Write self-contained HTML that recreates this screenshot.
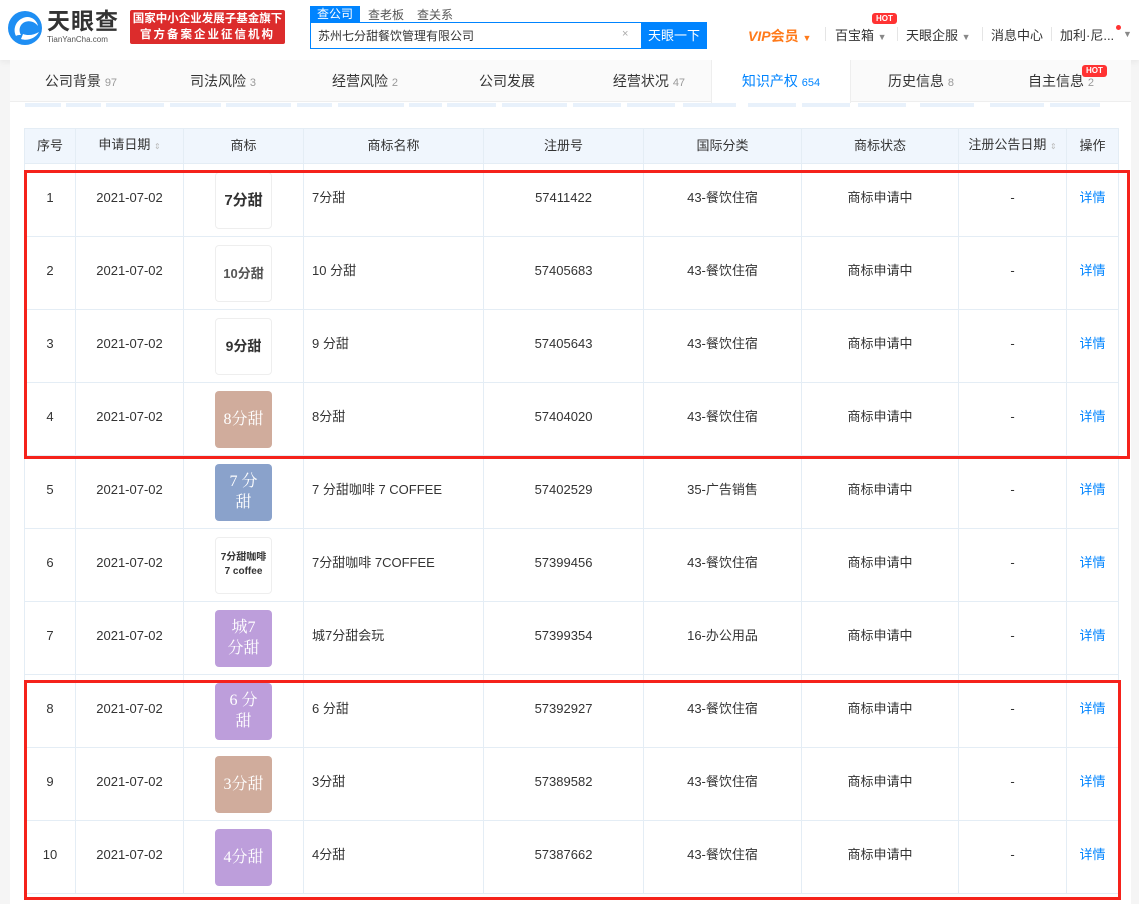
<!DOCTYPE html>
<html><head><meta charset="utf-8"><style>
*{margin:0;padding:0;box-sizing:border-box}
body{width:1139px;height:904px;overflow:hidden;background:#f5f5f5;font-family:"Liberation Sans","Noto Sans CJK SC",sans-serif;color:#333;font-size:13px;position:relative}
.hdr{position:absolute;left:0;top:0;width:1139px;height:60px;background:#fff;box-shadow:0 2px 6px rgba(0,0,0,.06)}
.abs{position:absolute}
.main{position:absolute;left:10px;top:60px;width:1121px;height:844px;background:#fff}
.tabs{position:absolute;left:10px;top:60px;width:1121px;height:42px;background:#fafafa;border-bottom:1px solid #eee}
.tab{position:absolute;top:0;height:42px;line-height:42px;font-size:14px;color:#333;text-align:center}
.tab small{font-size:11px;color:#999}
.pill{position:absolute;top:103px;height:4px;background:#e8f1fb}
table{position:absolute;left:24px;top:128px;border-collapse:collapse;table-layout:fixed;width:1094px}
td,th{border:1px solid #e4edf5;text-align:center;font-weight:normal;font-size:13px;line-height:16px}
th{height:35px;background:#f0f6fd;color:#333}
td{height:73px;padding-bottom:4px}
td.l{text-align:left;padding-left:8px}
a{color:#0084ff;text-decoration:none}
.lg{width:57px;height:57px;margin:4px auto 0;border-radius:4px;display:flex;align-items:center;justify-content:center;color:#fff;font-size:16px;line-height:21px;text-align:center;font-family:"Liberation Serif","Noto Serif CJK SC",serif}
.w{border:1px solid #eee;color:#333;font-weight:bold;font-family:"Liberation Sans","Noto Sans CJK SC",sans-serif}
.s{font-size:8px;color:#bbb}
.red{position:absolute;border:3px solid #f5221b}
</style></head><body>
<div class="hdr">
 <svg class="abs" style="left:7px;top:10px" width="36" height="36" viewBox="0 0 36 36"><circle cx="18" cy="18" r="17" fill="#1e8ef3"/><path d="M9 26C5 18 10 8 20 7c6 0 10 4 11 9-3-4-8-6-13-4-5 2-7 8-4 13-2 0-4 0-5 1z" fill="#fff"/><path d="M14 29c6 2 14 0 18-7-5 3-11 4-16 2z" fill="#fff"/></svg>
 <div class="abs" style="left:47px;top:8px;font-size:23px;font-weight:bold;color:#333;letter-spacing:1px;line-height:26px">天眼查</div>
 <div class="abs" style="left:47px;top:35px;font-size:8px;color:#555;line-height:9px">TianYanCha.com</div>
 <div class="abs" style="left:130px;top:10px;width:155px;height:34px;background:#dc2c2c;border-radius:2px;color:#fff;font-size:11.5px;font-weight:bold;line-height:16px;text-align:center;padding-top:1px">国家中小企业发展子基金旗下<br><span style="letter-spacing:2px">官方备案企业征信机构</span></div>
 <div class="abs" style="left:310px;top:6px;width:50px;height:17px;background:#0084ff;color:#fff;font-size:12px;text-align:center;line-height:17px">查公司</div>
 <div class="abs" style="left:368px;top:6px;font-size:12px;color:#555">查老板</div>
 <div class="abs" style="left:417px;top:6px;font-size:12px;color:#555">查关系</div>
 <div class="abs" style="left:310px;top:22px;width:397px;height:27px;border:1px solid #0084ff;background:#fff"></div>
 <div class="abs" style="left:318px;top:27px;font-size:12px;color:#333">苏州七分甜餐饮管理有限公司</div>
 <div class="abs" style="left:622px;top:28px;font-size:11px;color:#aaa">×</div>
 <div class="abs" style="left:641px;top:22px;width:66px;height:27px;background:#0084ff;color:#fff;font-size:13px;text-align:center;line-height:27px">天眼一下</div>
 <div class="abs" style="left:748px;top:26px;font-size:14px;font-weight:bold;color:#ff7a1a;font-style:italic">VIP<span style="font-style:normal">会员</span> <span style="font-size:9px">▼</span></div>
 <div class="abs" style="left:825px;top:27px;width:1px;height:14px;background:#e5e5e5"></div>
 <div class="abs" style="left:835px;top:25px;font-size:13px">百宝箱 <span style="font-size:9px;color:#888">▼</span></div>
 <div class="abs" style="left:872px;top:13px;background:#f33;color:#fff;font-size:8px;font-weight:bold;padding:0 4px;border-radius:3px;line-height:11px">HOT</div>
 <div class="abs" style="left:897px;top:27px;width:1px;height:14px;background:#e5e5e5"></div>
 <div class="abs" style="left:906px;top:25px;font-size:13px">天眼企服 <span style="font-size:9px;color:#888">▼</span></div>
 <div class="abs" style="left:982px;top:27px;width:1px;height:14px;background:#e5e5e5"></div>
 <div class="abs" style="left:991px;top:25px;font-size:13px">消息中心</div>
 <div class="abs" style="left:1051px;top:27px;width:1px;height:14px;background:#e5e5e5"></div>
 <div class="abs" style="left:1060px;top:25px;font-size:13px">加利·尼...</div>
 <div class="abs" style="left:1116px;top:25px;width:5px;height:5px;border-radius:50%;background:#f33"></div>
 <div class="abs" style="left:1123px;top:29px;font-size:9px;color:#888">▼</div>
</div>
<div class="main"></div>
<div class="tabs">
 <div class="tab" style="left:0;width:142px">公司背景 <small>97</small></div>
 <div class="tab" style="left:142px;width:142px">司法风险 <small>3</small></div>
 <div class="tab" style="left:284px;width:142px">经营风险 <small>2</small></div>
 <div class="tab" style="left:426px;width:142px">公司发展</div>
 <div class="tab" style="left:568px;width:142px">经营状况 <small>47</small></div>
 <div class="tab" style="left:701px;width:140px;background:#fff;color:#0084ff;border-left:1px solid #eee;border-right:1px solid #eee;height:43px">知识产权 <small style="color:#0084ff">654</small></div>
 <div class="tab" style="left:841px;width:140px">历史信息 <small>8</small></div>
 <div class="tab" style="left:981px;width:140px">自主信息 <small>2</small></div>
</div>
<div class="abs" style="left:1082px;top:65px;background:#f33;color:#fff;font-size:8px;font-weight:bold;padding:0 4px;border-radius:3px;line-height:12px">HOT</div>
<div class="pill" style="left:25px;width:36px"></div><div class="pill" style="left:66px;width:35px"></div><div class="pill" style="left:106px;width:58px"></div><div class="pill" style="left:170px;width:51px"></div><div class="pill" style="left:226px;width:65px"></div><div class="pill" style="left:297px;width:35px"></div><div class="pill" style="left:338px;width:66px"></div><div class="pill" style="left:409px;width:33px"></div><div class="pill" style="left:447px;width:49px"></div><div class="pill" style="left:502px;width:65px"></div><div class="pill" style="left:573px;width:48px"></div><div class="pill" style="left:627px;width:48px"></div><div class="pill" style="left:683px;width:53px"></div><div class="pill" style="left:748px;width:48px"></div><div class="pill" style="left:802px;width:48px"></div><div class="pill" style="left:858px;width:48px"></div><div class="pill" style="left:920px;width:54px"></div><div class="pill" style="left:990px;width:54px"></div><div class="pill" style="left:1050px;width:50px"></div>
<table>
<colgroup><col style="width:51px"><col style="width:108px"><col style="width:120px"><col style="width:180px"><col style="width:160px"><col style="width:158px"><col style="width:157px"><col style="width:108px"><col style="width:52px"></colgroup>
<tr><th>序号</th><th>申请日期 <span class="s">⇕</span></th><th>商标</th><th>商标名称</th><th>注册号</th><th>国际分类</th><th>商标状态</th><th>注册公告日期 <span class="s">⇕</span></th><th>操作</th></tr>
<tr><td>1</td><td>2021-07-02</td><td><div class="lg w" style="font-size:15px">7分甜</div></td><td class="l">7分甜</td><td>57411422</td><td>43-餐饮住宿</td><td>商标申请中</td><td>-</td><td><a>详情</a></td></tr>
<tr><td>2</td><td>2021-07-02</td><td><div class="lg w" style="font-size:13px;color:#555">10分甜</div></td><td class="l">10 分甜</td><td>57405683</td><td>43-餐饮住宿</td><td>商标申请中</td><td>-</td><td><a>详情</a></td></tr>
<tr><td>3</td><td>2021-07-02</td><td><div class="lg w" style="font-size:14px">9分甜</div></td><td class="l">9 分甜</td><td>57405643</td><td>43-餐饮住宿</td><td>商标申请中</td><td>-</td><td><a>详情</a></td></tr>
<tr><td>4</td><td>2021-07-02</td><td><div class="lg" style="background:#d0ac9c">8分甜</div></td><td class="l">8分甜</td><td>57404020</td><td>43-餐饮住宿</td><td>商标申请中</td><td>-</td><td><a>详情</a></td></tr>
<tr><td>5</td><td>2021-07-02</td><td><div class="lg" style="background:#8aa2cb">7 分<br>甜</div></td><td class="l">7 分甜咖啡 7 COFFEE</td><td>57402529</td><td>35-广告销售</td><td>商标申请中</td><td>-</td><td><a>详情</a></td></tr>
<tr><td>6</td><td>2021-07-02</td><td><div class="lg w" style="font-size:10px;line-height:14px">7分甜咖啡<br>7 coffee</div></td><td class="l">7分甜咖啡 7COFFEE</td><td>57399456</td><td>43-餐饮住宿</td><td>商标申请中</td><td>-</td><td><a>详情</a></td></tr>
<tr><td>7</td><td>2021-07-02</td><td><div class="lg" style="background:#bd9edb">城7<br>分甜</div></td><td class="l">城7分甜会玩</td><td>57399354</td><td>16-办公用品</td><td>商标申请中</td><td>-</td><td><a>详情</a></td></tr>
<tr><td>8</td><td>2021-07-02</td><td><div class="lg" style="background:#bd9edb">6 分<br>甜</div></td><td class="l">6 分甜</td><td>57392927</td><td>43-餐饮住宿</td><td>商标申请中</td><td>-</td><td><a>详情</a></td></tr>
<tr><td>9</td><td>2021-07-02</td><td><div class="lg" style="background:#d0ac9c">3分甜</div></td><td class="l">3分甜</td><td>57389582</td><td>43-餐饮住宿</td><td>商标申请中</td><td>-</td><td><a>详情</a></td></tr>
<tr><td>10</td><td>2021-07-02</td><td><div class="lg" style="background:#bd9edb">4分甜</div></td><td class="l">4分甜</td><td>57387662</td><td>43-餐饮住宿</td><td>商标申请中</td><td>-</td><td><a>详情</a></td></tr>
</table>
<div class="red" style="left:24px;top:170px;width:1106px;height:289px"></div>
<div class="red" style="left:24px;top:680px;width:1097px;height:220px"></div>
</body></html>
